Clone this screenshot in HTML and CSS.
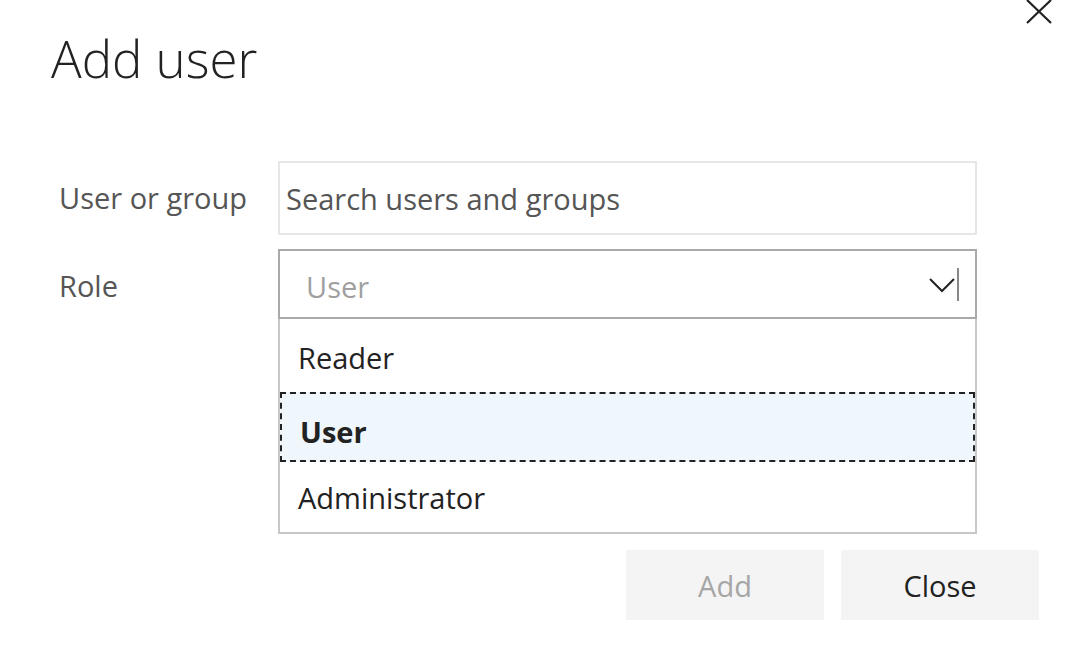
FILE: index.html
```html
<!DOCTYPE html>
<html>
<head>
<meta charset="utf-8">
<link rel="stylesheet" href="styles.css">
</head>
<body>
<div class="dialog">
  <button class="close-x" aria-label="Close">
    <svg width="26" height="24" viewBox="0 0 26 24"><path d="M1 0 L25 23 M25 0 L1 23" stroke="#222" stroke-width="2.2" fill="none"/></svg>
  </button>
  <h1 class="title">Add user</h1>
  <div class="form">
    <div class="label label-user">User or group</div>
    <div class="search">Search users and groups</div>
    <div class="label label-role">Role</div>
    <div class="role-field">
      <div class="select">
        <span class="select-value">User</span>
        <span class="chev">
          <svg width="26" height="16" viewBox="0 0 26 16"><path d="M1 2 L13 14 L25 2" stroke="#222" stroke-width="2" fill="none"/></svg>
        </span>
        <span class="caret"></span>
      </div>
      <ul class="options">
        <li class="option">Reader</li>
        <li class="option selected">User</li>
        <li class="option">Administrator</li>
      </ul>
    </div>
  </div>
  <div class="actions">
    <button class="btn disabled">Add</button>
    <button class="btn">Close</button>
  </div>
</div>
</body>
</html>
```
FILE: styles.css
```css
html, body {
  margin: 0;
  padding: 0;
  background: #fff;
}
body {
  font-family: "Open Sans", "Noto Sans", sans-serif;
  color: #222;
  width: 1070px;
  height: 657px;
  overflow: hidden;
}
.dialog {
  position: relative;
  padding: 0 31px 0 51px;
}
.close-x {
  position: absolute;
  top: 0;
  right: 18px;
  border: 0;
  background: none;
  padding: 0;
  width: 26px;
  height: 24px;
}
.close-x svg { display: block; }
.title {
  margin: 0;
  padding-top: 22px;
  font-weight: 300;
  font-size: 51px;
  line-height: 72px;
  height: 74px;
  color: #222;
}
.form {
  margin-top: 65px;
  display: grid;
  grid-template-columns: 227px 699px;
  row-gap: 14px;
  align-items: start;
}
.label {
  padding-left: 8px;
  font-size: 29px;
  color: #555;
}
.label-user { line-height: 74px; }
.label-role { line-height: 74px; }
.search {
  box-sizing: border-box;
  height: 74px;
  border: 2px solid #e6e6e6;
  padding: 2px 6px 0;
  font-size: 29px;
  line-height: 68px;
  color: #555;
}
.role-field { display: flex; flex-direction: column; }
.select {
  box-sizing: border-box;
  height: 70px;
  border: 2px solid #a9a9a9;
  display: flex;
  align-items: center;
  padding: 0 16px 0 26px;
}
.select-value {
  flex: 1;
  font-size: 29px;
  color: #a0a0a0;
  padding-top: 4px;
}
.chev { display: flex; margin-right: 2px; margin-top: 2px; }
.caret {
  width: 2px;
  height: 33px;
  background: #888;
}
.options {
  list-style: none;
  margin: 0;
  padding: 3px 0 0;
  box-sizing: border-box;
  border: 2px solid #c8c8c8;
  border-top: 0;
  height: 215px;
  display: flex;
  flex-direction: column;
}
.option {
  box-sizing: border-box;
  height: 70px;
  padding-left: 18px;
  padding-top: 2px;
  font-size: 29px;
  line-height: 68px;
  color: #222;
}
.selected {
  background: #eff6fc;
  border: 2px dashed #222;
  font-weight: 700;
  padding-top: 10px;
  line-height: 56px;
  padding-left: 18px;
}
.actions {
  display: flex;
  justify-content: flex-end;
  gap: 17px;
  margin-top: 16px;
}
.btn {
  width: 198px;
  height: 70px;
  border: 0;
  background: #f4f4f4;
  font-family: "Open Sans", "Noto Sans", sans-serif;
  font-size: 29px;
  color: #222;
  padding: 0;
}
.btn.disabled { color: #a6a6a6; }
```
